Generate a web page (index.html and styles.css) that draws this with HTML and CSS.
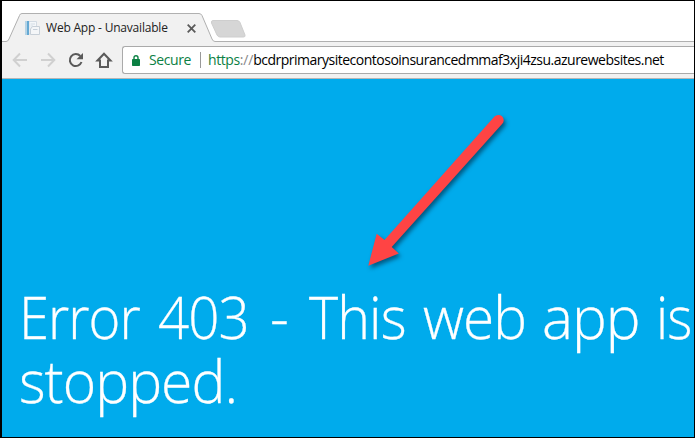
FILE: index.html
```html
<!DOCTYPE html>
<html lang="en">
<head>
<meta charset="utf-8">
<title>Web App - Unavailable</title>
<link rel="stylesheet" href="styles.css">
</head>
<body>
<div class="browser">
  <header class="tabstrip">
    <svg class="tab-shape" width="692" height="41" viewBox="2 1 692 41">
      <path d="M2 41.5H6Q8 41.5 9 39L19.500 15.500Q20 13.500 22 13.500H199Q201 13.500 202 15.500L212 39Q213 41.500 215 41.500H694V42H2Z" fill="#f1f1f1"/>
      <path d="M2 41.500H6Q8 41.500 9 39L19.500 15.500Q20 13.500 22 13.500H199Q201 13.500 202 15.500L212 39Q213 41.500 215 41.500H694" fill="none" stroke="#b0b0b0"/>
      <path d="M213 20.500H237Q239 20.500 240 22.500L245 35Q245.500 37 243.500 37H220Q218 37 217 35L211.500 23Q211 20.500 213 20.500Z" fill="#d6d6d6" stroke="#cecece"/>
    </svg>
    <div class="tab">
      <svg class="favicon" width="16" height="16" viewBox="0 0 16 16">
        <path d="M5 1.500H12.500V14H5Z" fill="#f4f7fa" stroke="#d3dbe3"/>
        <path d="M1 1H5V15H1Z" fill="#65a9d3"/><path d="M1 1H3V15H1Z" fill="#b6d4e6"/>
        <path d="M6.500 4H11M6.500 6H9M6.500 8H8" stroke="#d3dce4"/>
        <path d="M8.500 6.500H15.500V14.500H6.500V9Z" fill="#f4f6f8" stroke="#c8d0d8"/>
        <path d="M9 9.500H13.500" stroke="#c6d0da"/>
      </svg>
      <span class="tab-title">Web App - Unavailable</span>
      <svg class="close" width="9" height="9" viewBox="0 0 9 9"><path d="M.7.7 8.300 8.300M8.300.7.700 8.300" stroke="#5a5a5a" stroke-width="1.800"/></svg>
    </div>
  </header>
  <nav class="toolbar">
    <svg class="nav-icons" width="120" height="36" viewBox="2 42 120 36" fill="none">
      <path d="M27 60H14M20 53.500 13.700 60 20 66.500" stroke="#d0d0d0" stroke-width="2"/>
      <path d="M41 60H54M48 53.500 54.300 60 48 66.500" stroke="#d0d0d0" stroke-width="2"/>
      <path d="M80.300 56A6 6 0 1 0 81.500 62" stroke="#5a5a5a" stroke-width="2"/>
      <path d="M83 53V59.300H76.500Z" fill="#5a5a5a"/>
      <path d="M97.500 60.500 104 53.700 110.500 60.500H108V67H100V60.500Z" stroke="#5a5a5a" stroke-width="2"/>
    </svg>
    <div class="omnibox">
      <svg class="lock" width="8" height="11" viewBox="0 0 8 11"><path d="M2 5V2.800Q2 .8 4 .8T6 2.800V5" fill="none" stroke="#0b8043" stroke-width="1.400"/><rect y="4" width="8" height="7" rx=".7" fill="#0b8043"/></svg>
      <span class="secure">Secure</span>
      <span class="divider"></span>
      <span class="url"><span class="scheme">https</span><span class="slashes">://</span>bcdrprimarysitecontosoinsurancedmmaf3xji4zsu.azurewebsites.net</span>
    </div>
  </nav>
  <main class="page">
    <h1>
      <span class="line"><span class="word error">Error</span> <span class="word code">403</span> <span class="word dash">-</span> <span class="word this">This</span> <span class="word web">web</span> <span class="word app">app</span> <span class="word is">is</span></span>
      <span class="line"><span class="word stopped">stopped.</span></span>
    </h1>
    <svg class="arrow" width="170" height="180" viewBox="350 100 170 180">
      <path d="M494.500 116.600A5.300 5.300 0 0 1 502.300 123.800L391.700 247 398.800 253.500 368.300 265.700 376.700 233.800 384.500 240Z" fill="#ff4444"/>
    </svg>
  </main>
</div>
</body>
</html>
```
FILE: styles.css
```css
* { box-sizing: border-box; }
body { margin: 0; overflow: hidden; font-family: "Open Sans", "Noto Sans", sans-serif; }
.browser {
  display: flex;
  flex-direction: column;
  width: 695px;
  height: 438px;
  border: 1px solid #000;
  border-left-width: 2px;
  background: #fff;
}
.tabstrip { position: relative; flex: 0 0 41px; padding-top: 13px; }
.tab-shape { position: absolute; left: 0; top: 0; }
.tab {
  position: relative;
  display: flex;
  align-items: center;
  width: 198px;
  height: 28px;
  padding-left: 22px;
}
.tab-title {
  width: 130px;
  margin-left: 6px;
  font: 12px/16px "Open Sans", sans-serif;
  letter-spacing: -0.2px;
  white-space: nowrap;
  color: #222;
}
.close { margin-left: 11px; }
.toolbar {
  display: flex;
  flex: 0 0 37px;
  border-bottom: 1px solid #b5b5b5;
  background: #f1f1f1;
}
.omnibox {
  display: flex;
  align-items: center;
  flex: 1;
  height: 28px;
  margin-top: 4px;
  padding-left: 9px;
  border: 1px solid #aaa;
  border-right: 0;
  border-radius: 3px 0 0 3px;
  background: #fff;
  font: 14px/20px "Open Sans", sans-serif;
  white-space: nowrap;
}
.secure { width: 51px; margin-left: 9px; color: #0b8043; letter-spacing: -0.4px; }
.divider { width: 1px; height: 16px; background: #999; }
.url { margin-left: 7px; color: #000; letter-spacing: -0.5px; }
.scheme { color: #0b8043; letter-spacing: -0.4px; }
.slashes { color: #888; letter-spacing: -0.2px; }
.page { position: relative; flex: 1; padding: 205px 0 0 17px; background: #00abec; overflow: hidden; }
h1 {
  margin: 0;
  font: 300 58.5px/64px "Open Sans", sans-serif;
  letter-spacing: -1px;
  color: #fff;
  white-space: nowrap;
  -webkit-text-stroke: 0.3px #fff;
}
.line { display: flex; height: 64px; }
.word { flex: none; transform-origin: 0 50%; }
.error { width: 139px; transform: scaleX(.93); }
.code { width: 112px; transform: scaleX(.935); }
.dash { width: 39px; }
.this { width: 114px; transform: scaleX(.95); }
.web { width: 119px; transform: scaleX(.97); }
.app { width: 114px; }
.is { width: 36px; transform: scaleX(.92); }
.stopped { transform: scaleX(.975); }
.arrow { position: absolute; left: 348px; top: 21px; filter: drop-shadow(2px 3px 2px rgba(0, 35, 60, .6)); }
```
